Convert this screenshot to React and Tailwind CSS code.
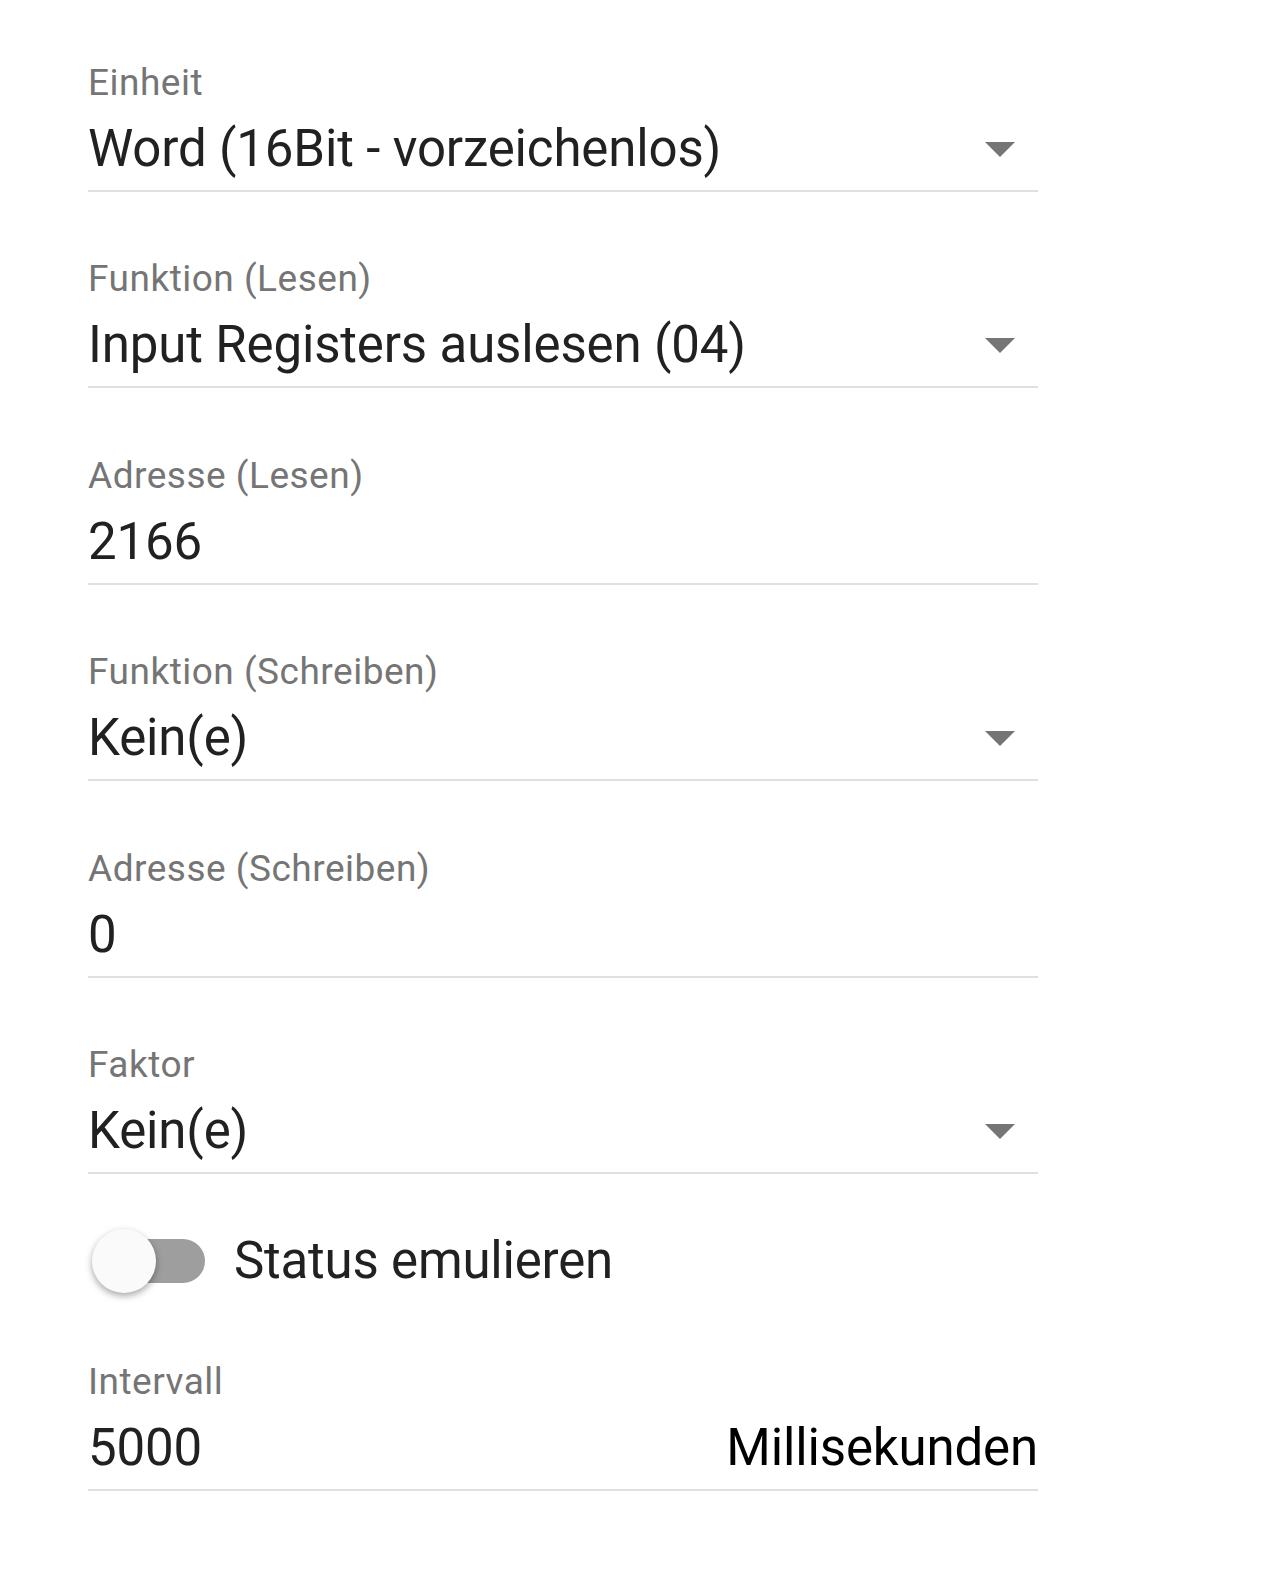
import React from "react";

const font = { fontFamily: "Roboto, 'Noto Sans', sans-serif" };

function Arrow() {
  return (
    <svg width="30" height="15" viewBox="0 0 30 15" className="block">
      <polygon points="0,0 30,0 15,15" fill="#757575" />
    </svg>
  );
}

function Field({ label, value, select, suffix, className = "" }) {
  return (
    <div className={"flex flex-col border-b-2 border-[#e0e0e0] pb-[11px] " + className}>
      <div className="h-[42px] text-[37px] leading-[42px] tracking-[0.5px] text-[#757575] whitespace-nowrap">{label}</div>
      <div className="mt-[15px] flex h-[60px] items-center justify-between">
        <span className="text-[51px] leading-[60px] tracking-[-0.15px] text-[#212121] whitespace-nowrap">{value}</span>
        {select && (
          <span className="mr-[23px]">
            <Arrow />
          </span>
        )}
        {suffix && (
          <span className="text-[51px] leading-[60px] tracking-[-0.15px] text-black whitespace-nowrap">{suffix}</span>
        )}
      </div>
    </div>
  );
}

export default function App() {
  return (
    <div className="min-h-[1584px] w-[1280px] bg-white" style={font}>
      <div className="flex w-[950px] flex-col ml-[88px] pt-[62px]">
        <Field label="Einheit" value="Word (16Bit - vorzeichenlos)" select />
        <Field className="mt-[66px]" label="Funktion (Lesen)" value="Input Registers auslesen (04)" select />
        <Field className="mt-[67px]" label="Adresse (Lesen)" value="2166" />
        <Field className="mt-[66px]" label="Funktion (Schreiben)" value="Kein(e)" select />
        <Field className="mt-[67px]" label="Adresse (Schreiben)" value="0" />
        <Field className="mt-[66px]" label="Faktor" value="Kein(e)" select />

        <div className="mt-[55px] flex h-[64px] items-center">
          <div className="relative ml-[10px] h-[44px] w-[107px] rounded-full bg-[#9e9e9e]">
            <div className="absolute left-[-6px] top-[-10px] h-[64px] w-[64px] rounded-full bg-[#fafafa] shadow-[0_3px_7px_rgba(0,0,0,0.35)]" />
          </div>
          <span className="ml-[29px] text-[51px] leading-[60px] tracking-[-0.2px] text-[#212121] whitespace-nowrap">
            Status emulieren
          </span>
        </div>

        <Field className="mt-[68px]" label="Intervall" value="5000" suffix="Millisekunden" />
      </div>
    </div>
  );
}
